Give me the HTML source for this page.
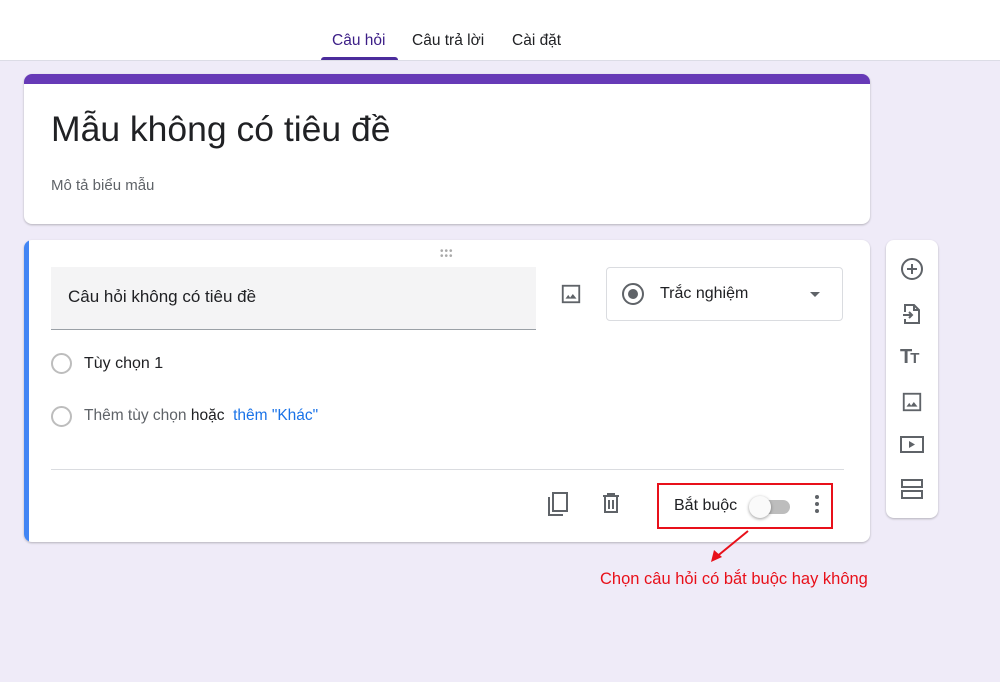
<!DOCTYPE html>
<html><head><meta charset="utf-8"><style>
*{box-sizing:border-box;margin:0;padding:0}
body{width:1000px;height:682px;background:#efebf8;font-family:"Liberation Sans",sans-serif;position:relative;overflow:hidden;color:#202124}
.top{position:absolute;left:0;top:0;width:1000px;height:61px;background:#fff;border-bottom:1px solid #dcdce6}
.tab{position:absolute;top:32px;font-size:15.5px;color:#202124}
.card{position:absolute;background:#fff;border-radius:8px;box-shadow:0 1px 2px rgba(0,0,0,.25)}
.ic{position:absolute}
</style></head><body>
<div class="top">
<div class="tab" style="left:332px;color:#3b1d86">Câu hỏi</div>
<div class="tab" style="left:412px">Câu trả lời</div>
<div class="tab" style="left:512px">Cài đặt</div>
<div style="position:absolute;left:321px;top:57px;width:77px;height:3px;background:#4b2c9c;border-radius:3px 3px 0 0"></div>
</div>
<div class="card" style="left:24px;top:74px;width:846px;height:150px;overflow:hidden">
<div style="height:10px;background:#673ab7"></div>
<div style="position:absolute;left:27px;top:35px;font-size:35.5px;color:#202124">Mẫu không có tiêu đề</div>
<div style="position:absolute;left:27px;top:103px;font-size:15px;color:#5f6368">Mô tả biểu mẫu</div>
</div>
<div class="card" style="left:24px;top:240px;width:846px;height:302px;overflow:hidden">
<div style="position:absolute;left:0;top:0;width:5px;height:302px;background:#4285f4"></div>
<div style="position:absolute;left:416px;top:9px;font-size:10px;color:#aaa;letter-spacing:1px;line-height:5px">•••<br>•••</div>
<div style="position:absolute;left:27px;top:27px;width:485px;height:63px;background:#f4f4f5;border-bottom:1px solid #9aa0a6"></div>
<div style="position:absolute;left:44px;top:47px;font-size:17px">Câu hỏi không có tiêu đề</div>
<svg class="ic" style="left:536px;top:43px" width="22" height="22" viewBox="0 0 24 24"><rect x="3" y="3" width="18" height="18" fill="none" stroke="#5f6368" stroke-width="2"/><path d="M6 17l3-4 2 3 3-4 4 5z" fill="#5f6368"/></svg>
<div style="position:absolute;left:582px;top:27px;width:237px;height:54px;border:1px solid #dadce0;border-radius:4px"></div>
<div style="position:absolute;left:598px;top:43px;width:22px;height:22px;border:2px solid #5f6368;border-radius:50%"></div>
<div style="position:absolute;left:604px;top:49px;width:10px;height:10px;background:#5f6368;border-radius:50%"></div>
<div style="position:absolute;left:636px;top:45px;font-size:16px">Trắc nghiệm</div>
<div style="position:absolute;left:786px;top:52px;border-left:5px solid transparent;border-right:5px solid transparent;border-top:5px solid #5f6368"></div>
<div style="position:absolute;left:27px;top:113px;width:21px;height:21px;border:2px solid #bdbdbd;border-radius:50%"></div>
<div style="position:absolute;left:60px;top:115px;font-size:16px">Tùy chọn 1</div>
<div style="position:absolute;left:27px;top:166px;width:21px;height:21px;border:2px solid #bdbdbd;border-radius:50%"></div>
<div style="position:absolute;left:60px;top:167px;font-size:15.5px;color:#5f6368">Thêm tùy chọn <span style="color:#202124">hoặc</span> <span style="color:#1a73e8">&nbsp;thêm "Khác"</span></div>
<div style="position:absolute;left:27px;top:229px;width:793px;height:1px;background:#dadce0"></div>
<svg class="ic" style="left:522px;top:251px" width="24" height="26" viewBox="0 0 24 26"><rect x="7" y="2" width="14" height="18" fill="none" stroke="#5f6368" stroke-width="2"/><path d="M3 6v18h14" fill="none" stroke="#5f6368" stroke-width="2"/></svg>
<svg class="ic" style="left:577px;top:252px" width="20" height="22" viewBox="0 0 20 22"><path d="M2 4h16M7 4V2h6v2M4 4v16h12V4M8 8v9M12 8v9" fill="none" stroke="#5f6368" stroke-width="2"/></svg>
<div style="position:absolute;left:650px;top:257px;font-size:16px">Bắt buộc</div>
<div style="position:absolute;left:730px;top:260px;width:36px;height:14px;background:#bdbdbd;border-radius:7px"></div>
<div style="position:absolute;left:725px;top:256px;width:22px;height:22px;background:#fafafa;border-radius:50%;box-shadow:0 1px 3px rgba(0,0,0,.4)"></div>
<div style="position:absolute;left:791px;top:255px;width:4px;height:4px;background:#5f6368;border-radius:50%;box-shadow:0 7px 0 #5f6368,0 14px 0 #5f6368"></div>
</div>
<div style="position:absolute;left:657px;top:483px;width:176px;height:46px;border:2px solid #e8101a"></div>
<div class="card" style="left:886px;top:240px;width:52px;height:278px"></div>
<svg class="ic" style="left:900px;top:257px" width="24" height="24" viewBox="0 0 24 24"><circle cx="12" cy="12" r="10" fill="none" stroke="#5f6368" stroke-width="2"/><path d="M12 7v10M7 12h10" stroke="#5f6368" stroke-width="2"/></svg>
<svg class="ic" style="left:900px;top:302px" width="24" height="24" viewBox="0 0 24 24"><path d="M5 10V3h9l5 5v13H5v-4M14 3v5h5M3 13h9M9 10l3 3-3 3" fill="none" stroke="#5f6368" stroke-width="2"/></svg>
<div style="position:absolute;left:900px;top:346px;font-size:20px;font-weight:bold;color:#5f6368;letter-spacing:-2px">T<span style="font-size:15px">T</span></div>
<svg class="ic" style="left:901px;top:391px" width="22" height="22" viewBox="0 0 24 24"><rect x="3" y="3" width="18" height="18" fill="none" stroke="#5f6368" stroke-width="2"/><path d="M6 17l3-4 2 3 3-4 4 5z" fill="#5f6368"/></svg>
<svg class="ic" style="left:899px;top:435px" width="26" height="20" viewBox="0 0 26 20"><rect x="2" y="2" width="22" height="15" fill="none" stroke="#5f6368" stroke-width="2"/><path d="M10 6l6 3.5-6 3.5z" fill="#5f6368"/></svg>
<svg class="ic" style="left:900px;top:478px" width="24" height="22" viewBox="0 0 24 22"><rect x="2" y="2" width="20" height="7" fill="none" stroke="#5f6368" stroke-width="2"/><rect x="2" y="13" width="20" height="7" fill="none" stroke="#5f6368" stroke-width="2"/></svg>
<svg class="ic" style="left:700px;top:528px" width="55" height="40" viewBox="0 0 55 40"><path d="M48 3L15 30" stroke="#e8101a" stroke-width="2"/><path d="M11 34l3-12 8 7z" fill="#e8101a"/></svg>
<div style="position:absolute;left:600px;top:570px;font-size:16.5px;color:#e8101a">Chọn câu hỏi có bắt buộc hay không</div>
</body></html>
